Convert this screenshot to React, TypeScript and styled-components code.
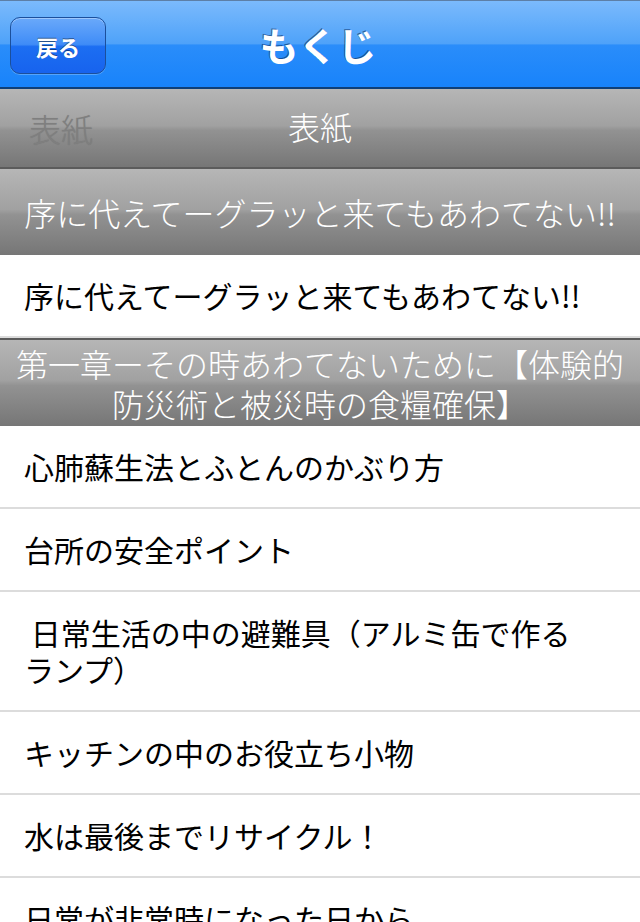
import styled, { createGlobalStyle } from 'styled-components'

const GlobalStyle = createGlobalStyle`
    body {
        margin: 0;
        background: #fff;
        font-family: "Noto Sans CJK JP", "Noto Sans", sans-serif;
    }
`

const Screen = styled.div`
    width: 640px;
    height: 922px;
    overflow: hidden;
    background: #fff;
`

const NavBar = styled.header`
    position: relative;
    height: 89px;
    box-sizing: border-box;
    border-top: 1px solid #5d7fa6;
    border-bottom: 2px solid #0e3f79;
    background: linear-gradient(
        #7bbafc 0%,
        #4ea2f9 50%,
        #2a8dfa 51%,
        #1883fb 100%
    );
    display: flex;
    align-items: center;
    justify-content: center;
`

const BackButton = styled.button`
    position: absolute;
    left: 10px;
    top: 16px;
    width: 96px;
    height: 57px;
    box-sizing: border-box;
    border-radius: 10px;
    border: 1px solid #1b4f9c;
    background: linear-gradient(
        #6aa9fa 0%,
        #3f8cf7 48%,
        #1c6ef2 52%,
        #1763ee 100%
    );
    box-shadow: inset 0 1px 0 rgba(255, 255, 255, 0.35), 0 1px 0 rgba(255, 255, 255, 0.25);
    color: #fff;
    font-family: "Noto Sans CJK JP", sans-serif;
    font-weight: 700;
    font-size: 22px;
    text-shadow: 0 -1px 0 rgba(0, 0, 0, 0.45);
    padding: 0;
`

const Title = styled.h1`
    margin: 0 0 0 -4px;
    font-family: "Noto Sans CJK JP", sans-serif;
    font-weight: 700;
    font-size: 39px;
    color: #fff;
    text-shadow: -1px -1px 0 rgba(10, 40, 90, 0.6);
`

const List = styled.div`
    display: flex;
    flex-direction: column;
`

const SectionHeader = styled.div<{ $height: number }>`
    position: relative;
    min-height: ${p => p.$height}px;
    box-sizing: border-box;
    border-top: 2px solid #5b5b5b;
    background: linear-gradient(
        #b6b6b6 0%,
        #a1a1a1 47%,
        #929292 53%,
        #767676 100%
    );
    display: flex;
    align-items: center;
    justify-content: center;
    padding: 3px 8px;
    color: #fff;
    font-size: 32px;
    font-weight: 300;
    line-height: 40px;
    text-align: center;
    &:first-child {
        border-top: none;
        padding-bottom: 8px;
    }
`

const GhostLabel = styled.span`
    position: absolute;
    left: 29px;
    top: 50%;
    transform: translateY(-50%);
    line-height: 40px;
    color: #7f7f7f;
    text-shadow: 0 0 1px rgba(0, 0, 0, 0.15);
`

const Row = styled.div`
    min-height: 82px;
    box-sizing: border-box;
    border-bottom: 2px solid #dcdcdc;
    display: flex;
    align-items: center;
    padding: 22px 44px 22px 24px;
    color: #000;
    font-size: 30px;
    line-height: 37px;
    white-space: pre-wrap;
`

const items = [
    '心肺蘇生法とふとんのかぶり方',
    '台所の安全ポイント',
    ' 日常生活の中の避難具（アルミ缶で作るランプ）',
    'キッチンの中のお役立ち小物',
    '水は最後までリサイクル！',
    '日常が非常時になった日から',
]

export default function App() {
    return (
        <Screen>
            <GlobalStyle />
            <NavBar>
                <BackButton>戻る</BackButton>
                <Title>もくじ</Title>
            </NavBar>
            <List>
                <SectionHeader $height={78}>
                    <GhostLabel>表紙</GhostLabel>
                    表紙
                </SectionHeader>
                <SectionHeader $height={88}>序に代えてーグラッと来てもあわてない!!</SectionHeader>
                <Row>序に代えてーグラッと来てもあわてない!!</Row>
                <SectionHeader $height={88}>第一章ーその時あわてないために【体験的防災術と被災時の食糧確保】</SectionHeader>
                {items.map(text => (
                    <Row key={text}>{text}</Row>
                ))}
            </List>
        </Screen>
    )
}
